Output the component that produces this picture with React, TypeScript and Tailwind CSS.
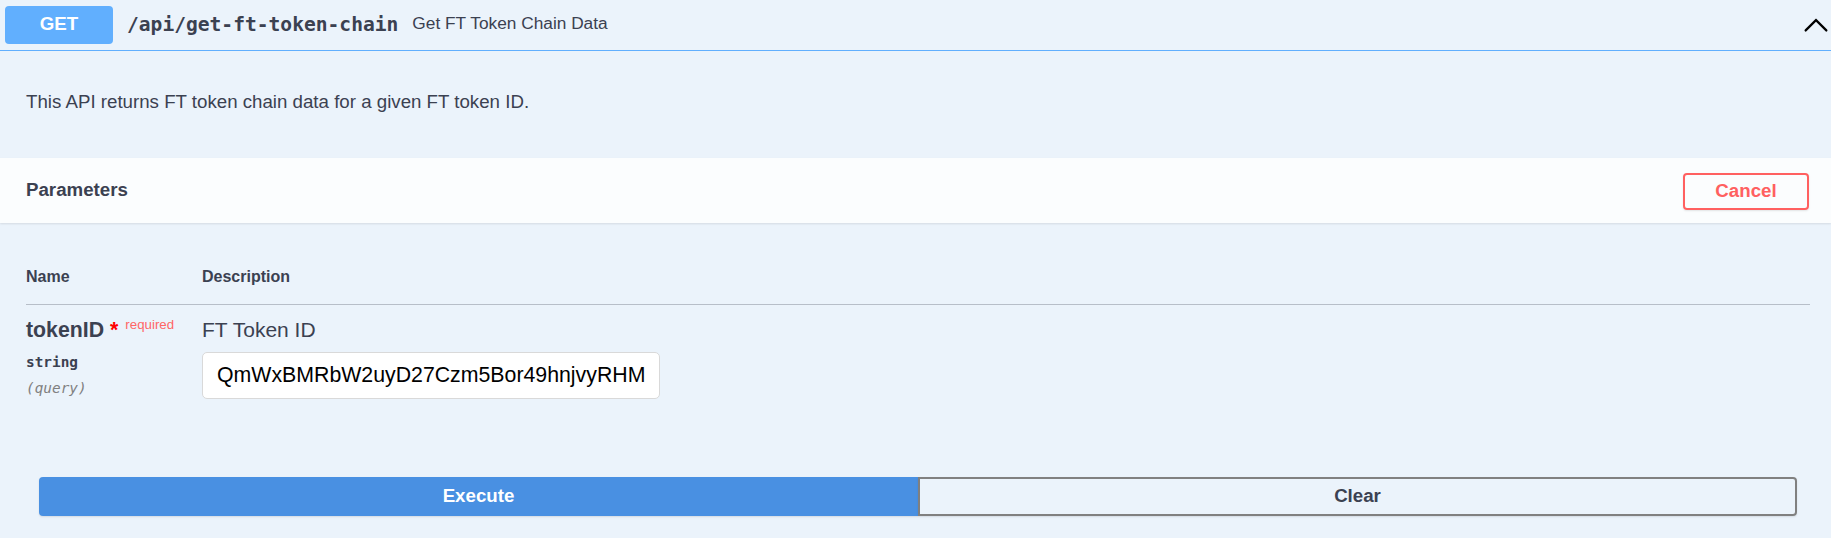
import { useState } from 'react';

const sans = 'font-["Liberation_Sans",Arial,sans-serif]';
const mono = 'font-["DejaVu_Sans_Mono",monospace]';

function ChevronUp() {
  return (
    <svg width="30" height="30" viewBox="0 0 20 20" className="mb-[3px] shrink-0">
      <path
        fill="#000"
        d="M17.418 14.908c-.311.32-.748.325-1.063 0L10 8.488l-6.355 6.42c-.315.325-.752.32-1.063 0-.311-.32-.32-.852 0-1.172l6.887-6.97c.315-.32.752-.32 1.063 0l6.886 6.97c.32.32.308.852 0 1.172z"
      />
    </svg>
  );
}

export default function App() {
  const [tokenId, setTokenId] = useState('QmWxBMRbW2uyD27Czm5Bor49hnjvyRHMkfCzHbNjLeDh8nTqA');

  return (
    <div className={`min-h-[538px] w-full bg-[#ebf3fb] text-[#3b4151] ${sans}`}>
      {/* summary bar */}
      <div className="flex h-[51px] items-center border-b border-[#61affe] pl-[5px]">
        <span className="mb-[1px] flex h-[38px] w-[108px] shrink-0 items-center justify-center rounded-[4px] bg-[#61affe] text-[18.7px] font-bold text-white">
          GET
        </span>
        <span className={`mb-[1px] ml-[14px] text-[19.6px] font-bold ${mono}`}>/api/get-ft-token-chain</span>
        <span className="mb-[2px] ml-[14px] text-[17.3px]">Get FT Token Chain Data</span>
        <div className="ml-auto flex">
          <ChevronUp />
        </div>
      </div>

      {/* description */}
      <div className="pb-[43px] pl-[26px] pt-[38px]">
        <p className="text-[18.7px] leading-[26px]">
          This API returns FT token chain data for a given FT token ID.
        </p>
      </div>

      {/* parameters header */}
      <div className="flex h-[65px] items-center justify-between bg-white/80 pl-[26px] pr-[22px] shadow-[0_1px_2px_rgba(0,0,0,0.1)]">
        <h4 className="text-[18.7px] font-bold">Parameters</h4>
        <button className="mt-[2px] h-[37px] w-[126px] rounded-[4px] border-2 border-[#ff6060] bg-transparent text-[18.7px] font-bold text-[#ff6060] shadow-[0_1px_2px_rgba(0,0,0,0.1)]">
          Cancel
        </button>
      </div>

      {/* parameter table */}
      <div className="pl-[26px] pr-[21px]">
        <div className="flex border-b border-[#b7bec8] pb-[17px] pt-[44px] text-[16px] font-bold leading-[20px]">
          <div className="w-[176px] shrink-0">Name</div>
          <div>Description</div>
        </div>
        <div className="flex pt-[11px]">
          <div className="w-[176px] shrink-0">
            <div className="whitespace-nowrap text-[21.3px] font-bold leading-[28px]">
              tokenID<span className="text-[#ff0000]">&nbsp;*</span>
              <span className="relative -top-[8px] pl-[7px] text-[13.3px] font-normal text-[#ff6666]">
                required
              </span>
            </div>
            <div className={`mt-[5px] text-[14.4px] font-bold leading-[20px] ${mono}`}>string</div>
            <div className={`mt-[6px] text-[14.4px] italic leading-[20px] text-[#808080] ${mono}`}>
              (query)
            </div>
          </div>
          <div>
            <div className="text-[21px] leading-[28px]">FT Token ID</div>
            <input
              value={tokenId}
              onChange={(e) => setTokenId(e.target.value)}
              className="mt-[8px] h-[47px] w-[458px] rounded-[5px] border border-[#d9d9d9] bg-white px-[14px] text-[21.3px] text-black outline-none"
            />
          </div>
        </div>
      </div>

      {/* execute / clear */}
      <div className="grid grid-cols-2 pb-[22px] pl-[39px] pr-[34px] pt-[78px]">
        <button className="h-[39px] rounded-l-[4px] bg-[#4990e2] text-[18.7px] font-bold text-white shadow-[0_1px_2px_rgba(0,0,0,0.1)]">
          Execute
        </button>
        <button className="h-[39px] rounded-r-[4px] border-2 border-[#808080] bg-transparent text-[18.7px] font-bold text-[#3b4151] shadow-[0_1px_2px_rgba(0,0,0,0.1)]">
          Clear
        </button>
      </div>
    </div>
  );
}
